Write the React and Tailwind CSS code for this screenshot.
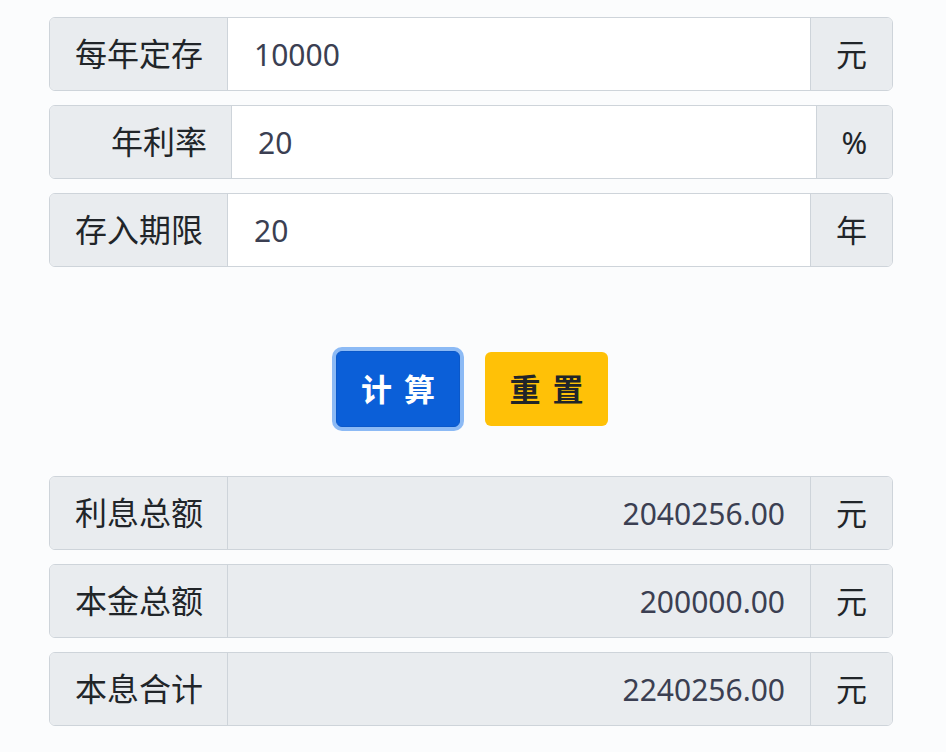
import React from 'react';

const font = { fontFamily: '"Noto Sans", "Noto Sans CJK SC", sans-serif' };

function InputRow({ label, value, unit, labelW = 'w-[178px]', unitW = 'w-[82px]', readOnly }) {
  return (
    <div className="flex h-[74px] rounded-[6px] border border-[#ced4da] overflow-hidden">
      <div className={`${labelW} shrink-0 bg-[#e9ecef] flex items-center justify-end pr-[24px] text-[32px] text-[#212529] border-r border-[#ced4da]`}>
        {label}
      </div>
      <div
        className={`flex-1 flex items-center text-[30px] text-[#3b3f52] ${
          readOnly ? 'bg-[#e9ecef] justify-end pr-[25px]' : 'bg-white pl-[26px]'
        }`}
      >
        {value}
      </div>
      <div className={`${unitW} shrink-0 bg-[#e9ecef] flex items-center justify-center text-[31px] text-[#212529] border-l border-[#ced4da]`}>
        {unit}
      </div>
    </div>
  );
}

export default function App() {
  const inputs = [
    { label: '每年定存', value: '10000', unit: '元' },
    { label: '年利率', value: '20', unit: '%', labelW: 'w-[182px]', unitW: 'w-[76px]' },
    { label: '存入期限', value: '20', unit: '年' },
  ];
  const results = [
    { label: '利息总额', value: '2040256.00', unit: '元' },
    { label: '本金总额', value: '200000.00', unit: '元' },
    { label: '本息合计', value: '2240256.00', unit: '元' },
  ];

  return (
    <div className="w-[946px] h-[752px] bg-[#fbfcfd] pt-[17px] pl-[49px] pr-[53px]" style={font}>
      {/* Inputs */}
      <div className="flex flex-col gap-[14px]">
        {inputs.map((r, i) => (
          <InputRow key={i} {...r} />
        ))}
      </div>

      {/* Buttons */}
      <div className="flex justify-center items-center gap-[25px] mt-[84px] h-[76px] pl-[2px]">
        <button className="w-[124px] h-[76px] rounded-[6px] bg-[#0b5fd8] text-white text-[31px] font-bold tracking-[12px] pl-[12px] ring-4 ring-[#8cbaf5] border border-[#0a58ca]">
          计算
        </button>
        <button className="w-[123px] h-[74px] rounded-[6px] bg-[#ffc107] text-[#212529] text-[31px] font-bold tracking-[12px] pl-[12px]">
          重置
        </button>
      </div>

      {/* Results */}
      <div className="flex flex-col gap-[14px] mt-[49px]">
        {results.map((r, i) => (
          <InputRow key={i} {...r} readOnly />
        ))}
      </div>
    </div>
  );
}
